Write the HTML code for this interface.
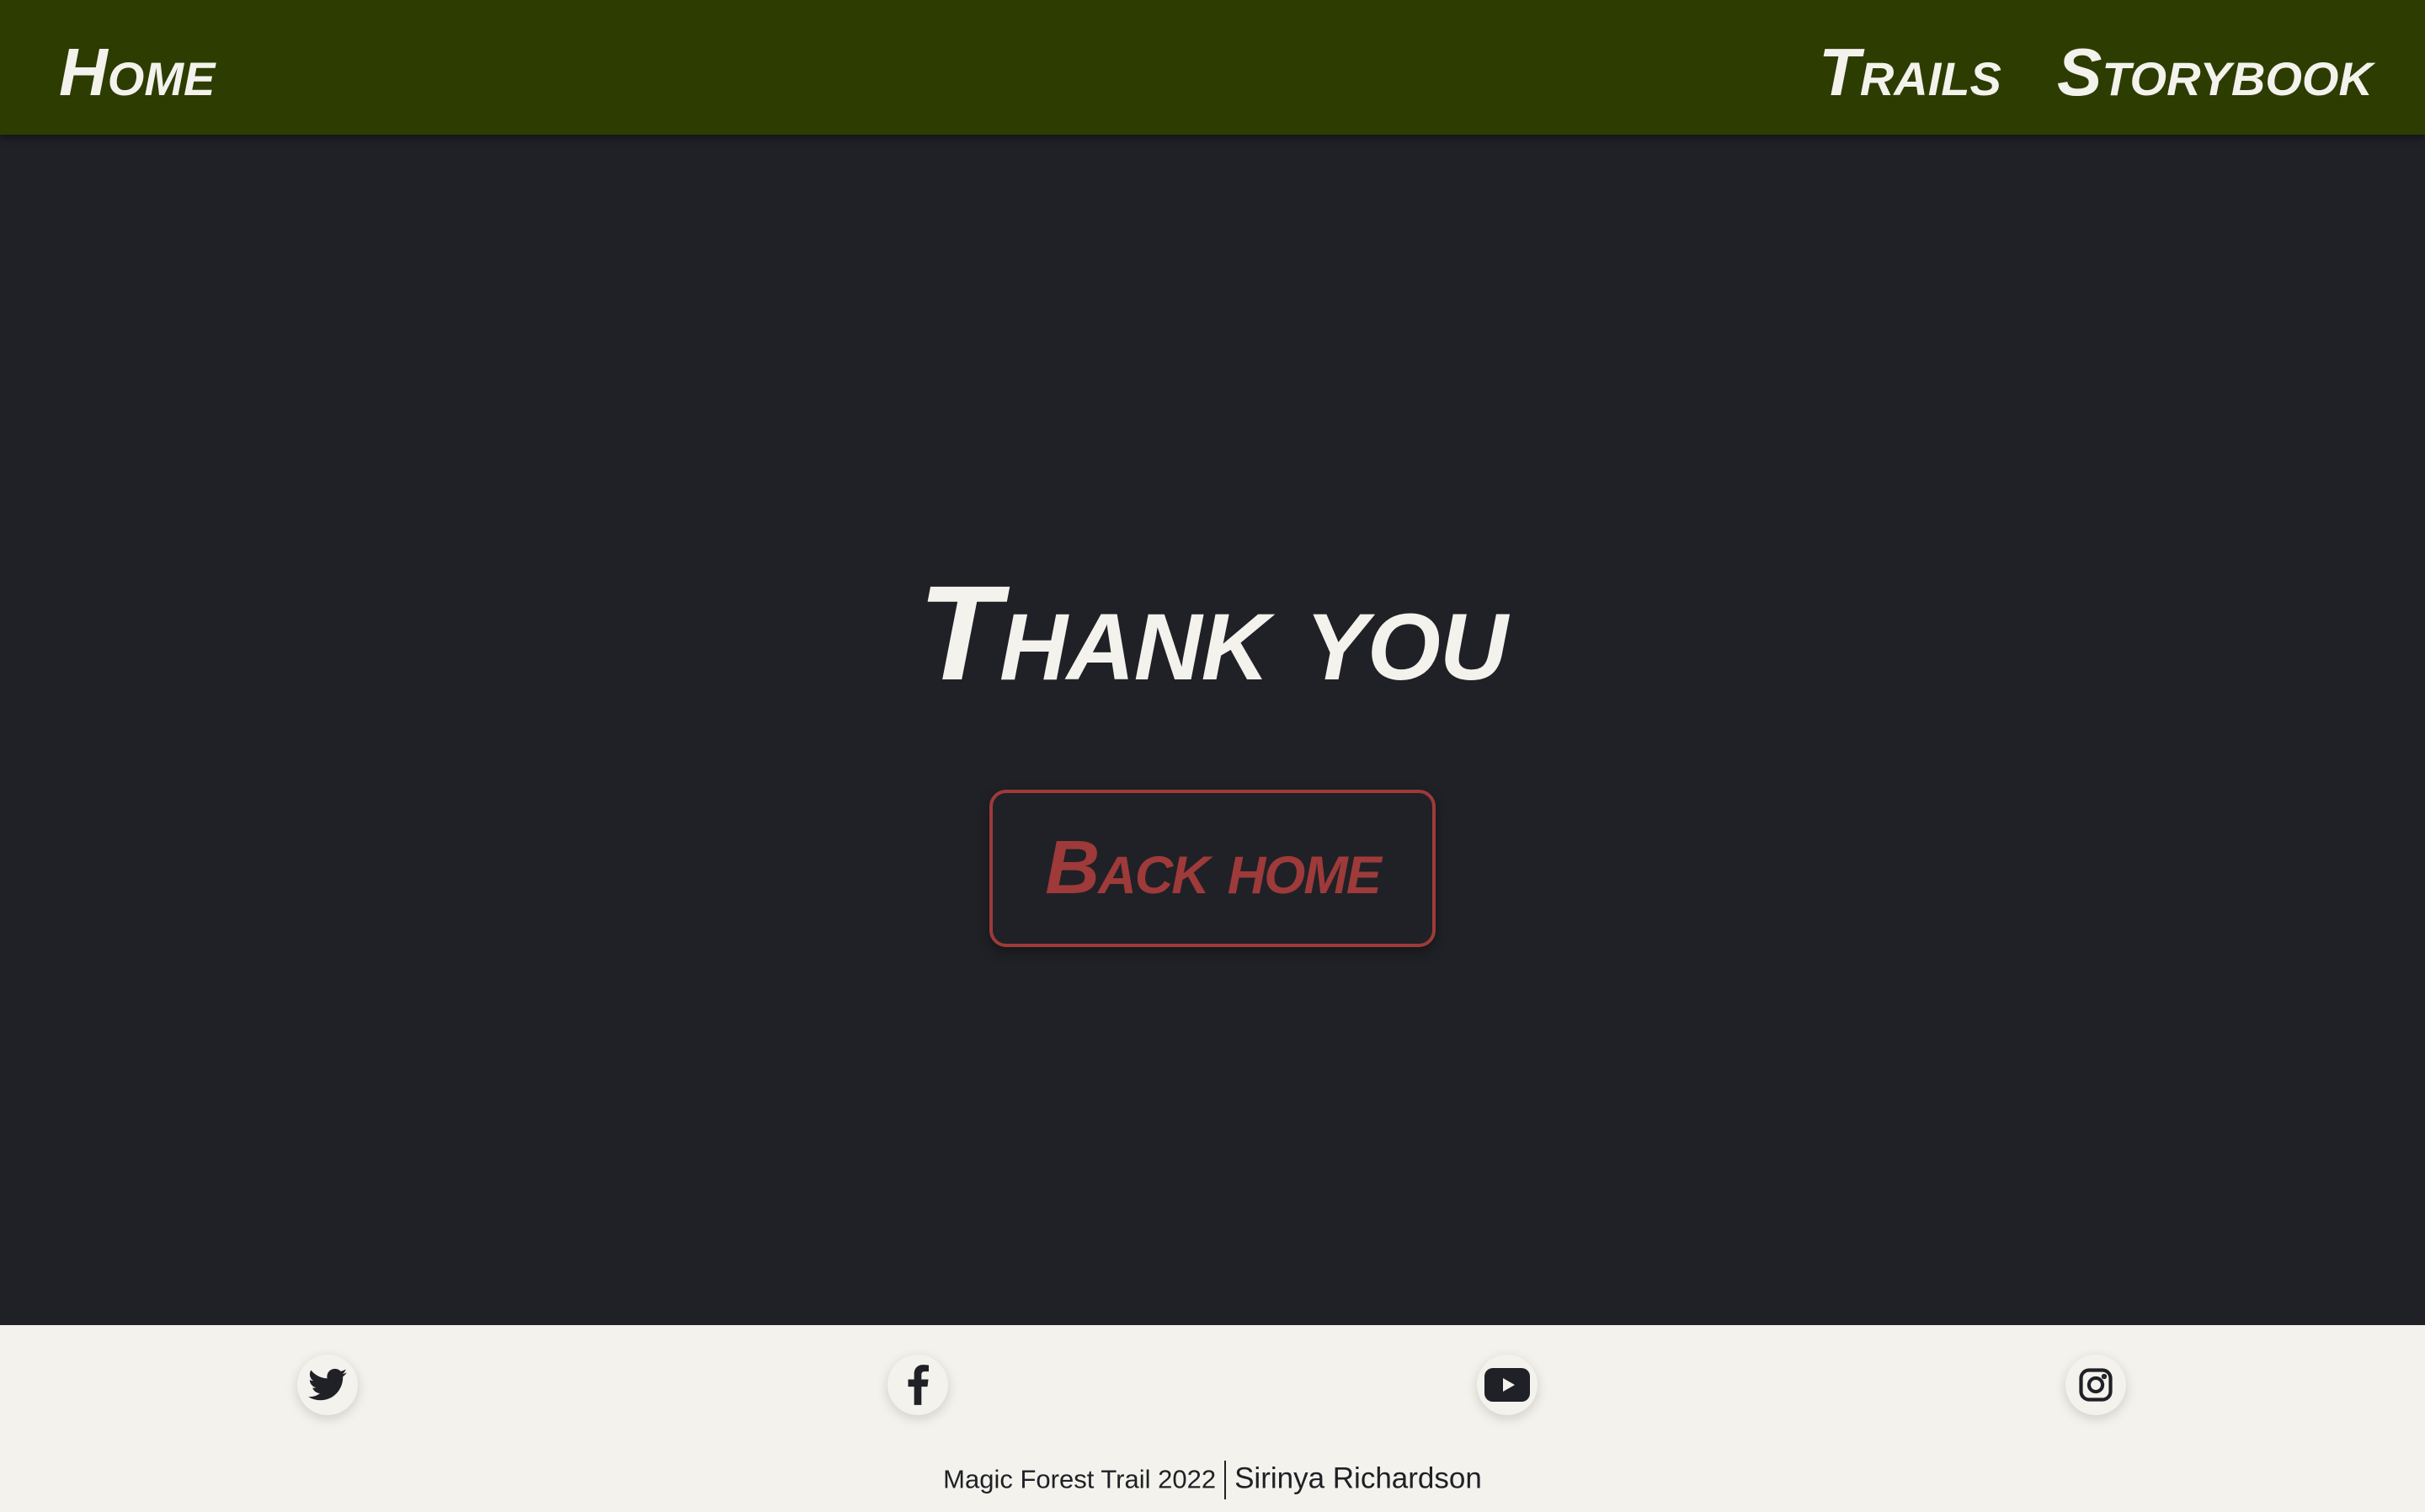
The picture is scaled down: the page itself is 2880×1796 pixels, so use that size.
<!DOCTYPE html>
<html><head><meta charset="utf-8"><style>
html,body{margin:0;padding:0;width:2880px;height:1796px;overflow:hidden;background:#202126;font-family:"Liberation Sans",sans-serif}
nav{position:absolute;left:0;top:0;width:2880px;height:160px;background:#2d3c00;box-shadow:0 4px 8px rgba(0,0,0,.4)}
.hand{font-weight:bold;font-style:italic;font-variant:small-caps;color:#f3f2ec;position:absolute;white-space:nowrap}
footer{position:absolute;left:0;top:1574px;width:2880px;height:222px;background:#f3f2ec}
.ic{position:absolute;top:35px;width:72px;height:72px;border-radius:50%;background:#f3f2ec;box-shadow:0 4px 14px rgba(0,0,0,.15);display:flex;align-items:center;justify-content:center}
</style></head><body>
<nav>
<div class="hand" style="left:70px;top:40px;font-size:80px">Home</div>
<div class="hand" style="left:2160px;top:40px;font-size:80px">Trails</div>
<div class="hand" style="left:2443px;top:40px;font-size:80px">Storybook</div>
</nav>
<div class="hand" style="left:0;width:2880px;text-align:center;top:660px;font-size:160px;letter-spacing:-1px">Thank you</div>
<div style="position:absolute;left:1175px;top:938px;width:522px;height:179px;border:4px solid #9e3a3a;border-radius:20px;box-shadow:0 6px 14px rgba(0,0,0,.35)"></div>
<div class="hand" style="left:1175px;width:530px;text-align:center;top:980px;font-size:90px;color:#9e3a3a;letter-spacing:-2px">Back home</div>
<footer>
<div class="ic" style="left:353px"><svg width="46" height="40" viewBox="0 0 24 20"><path fill="#202126" d="M24 2.4a10 10 0 0 1-2.8.8A5 5 0 0 0 23.3.4a10 10 0 0 1-3.1 1.2A4.9 4.9 0 0 0 11.8 6 14 14 0 0 1 1.7.9a4.9 4.9 0 0 0 1.5 6.6A4.9 4.9 0 0 1 1 6.9a4.9 4.9 0 0 0 3.9 4.8 5 5 0 0 1-2.2.1 4.9 4.9 0 0 0 4.6 3.4A9.9 9.9 0 0 1 0 17.3 14 14 0 0 0 7.5 19.5c9 0 14-7.5 14-14v-.6A10 10 0 0 0 24 2.4z"/></svg></div>
<div class="ic" style="left:1054px"><svg width="26" height="48" viewBox="0 0 12 22"><path fill="#202126" d="M8 22V12h3.3l.5-4H8V5.6c0-1.1.3-1.9 1.9-1.9H12V.2A26 26 0 0 0 9 0C6 0 4 1.8 4 5.2V8H.7v4H4v10z"/></svg></div>
<div class="ic" style="left:1754px"><svg width="54" height="40" viewBox="0 0 27 20"><rect x="0" y="0" width="27" height="20" rx="5" fill="#202126"/><path d="M11 6l7 4-7 4z" fill="#f3f2ec"/></svg></div>
<div class="ic" style="left:2453px"><svg width="42" height="42" viewBox="0 0 24 24" fill="none" stroke="#202126" stroke-width="2.4"><rect x="2" y="2" width="20" height="20" rx="5.5"/><circle cx="12" cy="12" r="4.6"/><circle cx="17.7" cy="6.3" r=".6" fill="#202126"/></svg></div>
<div style="position:absolute;left:0;width:2880px;top:161px;text-align:center;font-size:35px;color:#202126;white-space:nowrap"><span style="font-size:31px">Magic Forest Trail 2022</span><span style="display:inline-block;width:2px;height:46px;background:#202126;vertical-align:middle;margin:0 10px"></span><span>Sirinya Richardson</span></div>
</footer>
</body></html>
